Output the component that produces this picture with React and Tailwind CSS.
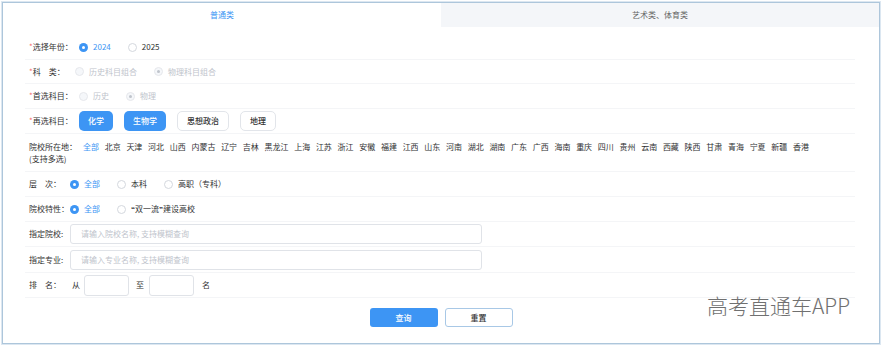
import React from 'react';

const provinces = [
  '全部', '北京', '天津', '河北', '山西', '内蒙古', '辽宁', '吉林', '黑龙江', '上海', '江苏',
  '浙江', '安徽', '福建', '江西', '山东', '河南', '湖北', '湖南', '广东', '广西', '海南',
  '重庆', '四川', '贵州', '云南', '西藏', '陕西', '甘肃', '青海', '宁夏', '新疆', '香港',
];

const Radio = ({ checked, disabled, children }) => {
  let dot = 'border border-[#d4d8de] bg-white';
  if (checked && !disabled) dot = 'bg-[#3d95f4]';
  if (disabled) dot = 'border border-[#e6e8ec] bg-[#f5f7fa]';
  let text = 'text-[#303133]';
  if (checked && !disabled) text = 'text-[#3d95f4]';
  if (disabled) text = 'text-[#c0c4cc]';
  return (
    <div className="flex items-center mr-[17px]">
      <span className={`flex items-center justify-center w-[9px] h-[9px] rounded-full ${dot}`}>
        {checked && <span className={`w-[3px] h-[3px] rounded-full ${disabled ? 'bg-[#c0c4cc]' : 'bg-white'}`} />}
      </span>
      <span className={`ml-[5px] ${text}`}>{children}</span>
    </div>
  );
};

const Label = ({ w, star, children }) => (
  <div className={`flex-none ${w} text-[#333]`}>
    {star && <span className="text-[#f56c6c]">*</span>}
    {children}
  </div>
);

const Row = ({ h = 'h-[25px]', children }) => (
  <div className={`flex items-center pl-[4px] border-b border-[#f4f5f7] ${h}`}>{children}</div>
);

const Chip = ({ on, children }) => (
  <div
    className={`h-[20px] px-[9px] flex items-center rounded-[5px] font-medium ${
      on ? 'bg-[#3d95f4] text-white' : 'bg-white border border-[#e2e5ea] text-[#333]'
    }`}
  >
    {children}
  </div>
);

export default function App() {
  return (
    <div className="min-h-[348px] bg-white pt-[2px] pl-[2px] font-['Noto_Sans_CJK_SC',sans-serif] text-[8px] leading-[12px] text-[#333]">
      <div className="relative w-[878px] h-[342px] border border-[#adc6db] shadow-[0_0_0_1px_#dce7f1] bg-white">
        {/* tabs */}
        <div className="flex h-[24px]">
          <div className="flex-1 flex items-center justify-center text-[#3d95f4]">普通类</div>
          <div className="flex-1 flex items-center justify-center bg-[#f4f6f9] text-[#666]">艺术类、体育类</div>
        </div>

        <div className="ml-[22px] w-[830px] pt-[8px]">
          <Row>
            <Label w="w-[50px]" star>选择年份：</Label>
            <Radio checked>2024</Radio>
            <Radio>2025</Radio>
          </Row>
          <Row h="h-[24px]">
            <Label w="w-[46px]" star>科　类：</Label>
            <Radio disabled>历史科目组合</Radio>
            <Radio disabled checked>物理科目组合</Radio>
          </Row>
          <Row>
            <Label w="w-[50px]" star>首选科目：</Label>
            <Radio disabled>历史</Radio>
            <Radio disabled checked>物理</Radio>
          </Row>
          <Row>
            <Label w="w-[50px]" star>再选科目：</Label>
            <div className="flex gap-[11px]">
              <Chip on>化学</Chip>
              <Chip on>生物学</Chip>
              <Chip>思想政治</Chip>
              <Chip>地理</Chip>
            </div>
          </Row>
          <div className="flex items-start pl-[4px] pt-[7px] h-[38px] border-b border-[#f4f5f7]">
            <div className="flex-none w-[54px] text-[#333]">
              <div>院校所在地：</div>
              <div>(支持多选)</div>
            </div>
            <div className="flex gap-[5.7px]">
              {provinces.map((p, i) => (
                <span key={p} className={i === 0 ? 'text-[#3d95f4]' : 'text-[#303133]'}>
                  {p}
                </span>
              ))}
            </div>
          </div>
          <Row>
            <Label w="w-[41px]">层　次：</Label>
            <Radio checked>全部</Radio>
            <Radio>本科</Radio>
            <Radio>高职（专科）</Radio>
          </Row>
          <Row>
            <Label w="w-[41px]">院校特性：</Label>
            <Radio checked>全部</Radio>
            <Radio>
              <span className="font-['Liberation_Sans'] font-bold">“</span>双一流<span className="font-['Liberation_Sans'] font-bold">”</span>建设高校
            </Radio>
          </Row>
          <Row>
            <Label w="w-[41px]">指定院校:</Label>
            <div className="w-[412px] h-[20px] flex items-center px-[10px] border border-[#e0e3e8] rounded-[3px] text-[#c0c4cc]">
              请输入院校名称, 支持模糊查询
            </div>
          </Row>
          <Row h="h-[26px]">
            <Label w="w-[41px]">指定专业:</Label>
            <div className="w-[412px] h-[20px] flex items-center px-[10px] border border-[#e0e3e8] rounded-[3px] text-[#c0c4cc]">
              请输入专业名称, 支持模糊查询
            </div>
          </Row>
          <Row>
            <Label w="w-[43px]">排　名：</Label>
            <span>从</span>
            <div className="ml-[4px] w-[45px] h-[21px] border border-[#e0e3e8] rounded-[3px]" />
            <span className="ml-[7px]">至</span>
            <div className="ml-[5px] w-[45px] h-[21px] border border-[#e0e3e8] rounded-[3px]" />
            <span className="ml-[8px]">名</span>
          </Row>
        </div>

        <div className="flex justify-center gap-[7px] mt-[10px]">
          <button className="w-[68px] h-[19px] rounded-[3px] bg-[#3d95f4] text-white font-medium">查询</button>
          <button className="w-[68px] h-[19px] rounded-[3px] border border-[#a8c8e6] bg-white text-[#333] font-medium">重置</button>
        </div>

        <div className="absolute left-[704px] top-[292px] text-[21px] leading-none font-light text-[#707070]">
          高考直通车APP
        </div>
      </div>
    </div>
  );
}
